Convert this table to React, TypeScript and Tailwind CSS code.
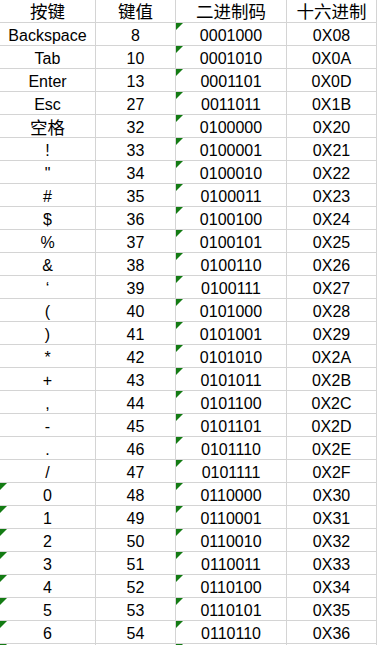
import React from 'react';

type Row = [string, string, string, string];

const rows: Row[] = [
  ['Backspace', '8', '0001000', '0X08'],
  ['Tab', '10', '0001010', '0X0A'],
  ['Enter', '13', '0001101', '0X0D'],
  ['Esc', '27', '0011011', '0X1B'],
  ['空格', '32', '0100000', '0X20'],
  ['!', '33', '0100001', '0X21'],
  ['"', '34', '0100010', '0X22'],
  ['#', '35', '0100011', '0X23'],
  ['$', '36', '0100100', '0X24'],
  ['%', '37', '0100101', '0X25'],
  ['&', '38', '0100110', '0X26'],
  ['‘', '39', '0100111', '0X27'],
  ['(', '40', '0101000', '0X28'],
  [')', '41', '0101001', '0X29'],
  ['*', '42', '0101010', '0X2A'],
  ['+', '43', '0101011', '0X2B'],
  [',', '44', '0101100', '0X2C'],
  ['-', '45', '0101101', '0X2D'],
  ['.', '46', '0101110', '0X2E'],
  ['/', '47', '0101111', '0X2F'],
  ['0', '48', '0110000', '0X30'],
  ['1', '49', '0110001', '0X31'],
  ['2', '50', '0110010', '0X32'],
  ['3', '51', '0110011', '0X33'],
  ['4', '52', '0110100', '0X34'],
  ['5', '53', '0110101', '0X35'],
  ['6', '54', '0110110', '0X36'],
  ['7', '55', '0110111', '0X37'],
];

const headers = ['按键', '键值', '二进制码', '十六进制'];

const isCjk = (s: string) => /[\u4e00-\u9fff]/.test(s);

// little green "number stored as text" marker in the cell corner
const Flag = () => (
  <div className="absolute left-0 top-0 w-0 h-0 border-t-[7px] border-r-[7px] border-t-[#137b13] border-r-transparent" />
);

const Cell = ({ text, flag }: { text: string; flag?: boolean }) => (
  <div className="relative h-[23px] border-b border-r border-[#d4d4d4] flex justify-center whitespace-nowrap text-black">
    {flag && <Flag />}
    {isCjk(text) ? (
      <span className="pt-[3px] leading-[18px] text-[17.5px] font-['Noto_Sans_CJK_SC',sans-serif]">{text}</span>
    ) : (
      <span className="pt-[4px] leading-[18px] text-[16px] font-['Liberation_Sans',Arial,sans-serif]">{text}</span>
    )}
  </div>
);

export default function App() {
  return (
    <div className="w-[377px] h-[645px] overflow-hidden bg-white">
      <div className="grid grid-cols-[96px_80px_111px_90px]">
        {headers.map((h) => (
          <div
            key={h}
            className="h-[23px] border-b border-r border-[#d4d4d4] flex items-center justify-center text-black"
          >
            <span className="leading-[22px] text-[17.5px] font-['Noto_Sans_CJK_SC',sans-serif]">{h}</span>
          </div>
        ))}
        {rows.map((r) => {
          const digitKey = /^[0-9]$/.test(r[0]);
          return (
            <React.Fragment key={r[1]}>
              <Cell text={r[0]} flag={digitKey} />
              <Cell text={r[1]} />
              <Cell text={r[2]} flag />
              <Cell text={r[3]} />
            </React.Fragment>
          );
        })}
      </div>
    </div>
  );
}
